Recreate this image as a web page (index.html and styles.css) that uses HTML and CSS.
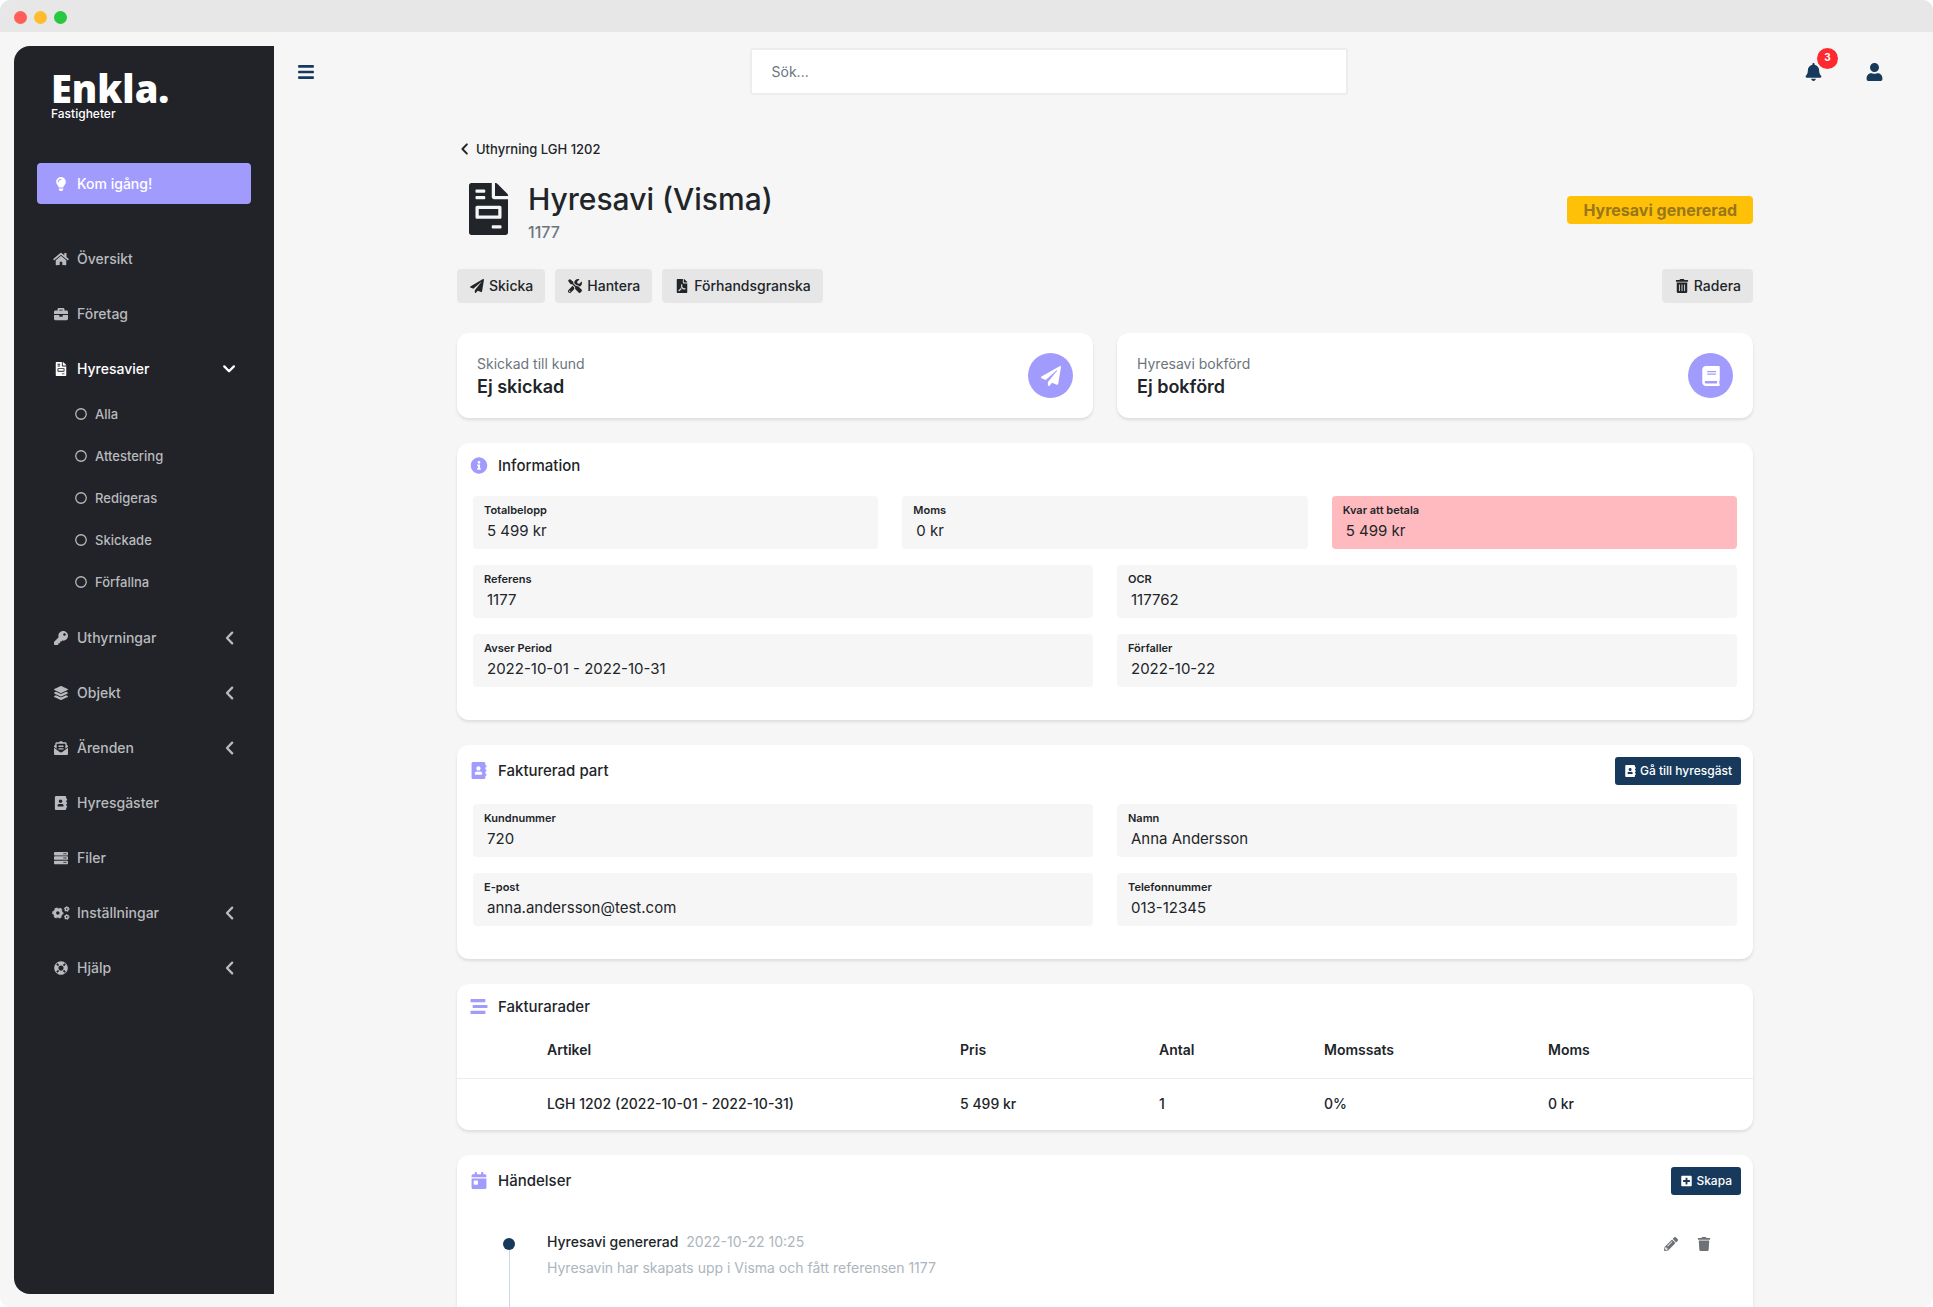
FILE: index.html
```html
<!DOCTYPE html>
<html lang="sv">
<head>
    <meta charset="UTF-8">
    <meta name="viewport" content="width=device-width, initial-scale=1.0">
    <title>Hyresavi (Visma) - Enkla Fastigheter</title>
    <link rel="stylesheet" href="styles.css">
</head>
<body>
    <!-- Icon sprite -->
    <svg class="sprite" aria-hidden="true">
        <symbol id="i-bars" viewBox="0 0 448 512"><path d="M16 132h416c9 0 16-7 16-16V76c0-9-7-16-16-16H16C7 60 0 67 0 76v40c0 9 7 16 16 16zm0 160h416c9 0 16-7 16-16v-40c0-9-7-16-16-16H16c-9 0-16 7-16 16v40c0 9 7 16 16 16zm0 160h416c9 0 16-7 16-16v-40c0-9-7-16-16-16H16c-9 0-16 7-16 16v40c0 9 7 16 16 16z"/></symbol>
        <symbol id="i-bell" viewBox="0 0 448 512"><path d="M224 512c35.32 0 63.97-28.65 63.97-64H160.03c0 35.35 28.65 64 63.97 64zm215.39-149.71c-19.32-20.76-55.47-51.99-55.47-154.29 0-77.7-54.48-139.9-127.94-155.16V32c0-17.67-14.32-32-31.98-32s-31.98 14.33-31.98 32v20.84C118.56 68.1 64.08 130.3 64.08 208c0 102.3-36.15 133.53-55.47 154.29-6 6.45-8.66 14.16-8.61 21.71.11 16.4 12.98 32 32.1 32h383.8c19.12 0 32-15.6 32.1-32 .05-7.55-2.61-15.27-8.61-21.71z"/></symbol>
        <symbol id="i-user" viewBox="0 0 448 512"><path d="M224 256c70.7 0 128-57.3 128-128S294.7 0 224 0 96 57.3 96 128s57.3 128 128 128zm89.6 32h-16.7c-22.2 10.2-46.9 16-72.9 16s-50.6-5.8-72.9-16h-16.7C60.2 288 0 348.2 0 422.4V464c0 26.5 21.5 48 48 48h352c26.5 0 48-21.5 48-48v-41.6c0-74.2-60.2-134.4-134.4-134.4z"/></symbol>
        <symbol id="i-bulb" viewBox="0 0 352 512"><path d="M96.06 454.35c.01 6.29 1.87 12.45 5.36 17.69l17.09 25.69a31.99 31.99 0 0 0 26.64 14.28h61.71a31.99 31.99 0 0 0 26.64-14.28l17.09-25.69a31.989 31.989 0 0 0 5.36-17.69l.04-38.35H96.01l.05 38.35zM0 176c0 44.37 16.45 84.85 43.56 115.78 16.52 18.85 42.36 58.23 52.21 91.45.04.26.07.52.11.78h160.24c.04-.26.07-.51.11-.78 9.85-33.22 35.69-72.6 52.21-91.45C335.55 260.85 352 220.37 352 176 352 78.61 272.91-.3 175.45 0 73.44.31 0 82.97 0 176zm176-80c-44.11 0-80 35.89-80 80 0 8.84-7.16 16-16 16s-16-7.16-16-16c0-61.76 50.24-112 112-112 8.84 0 16 7.16 16 16s-7.16 16-16 16z"/></symbol>
        <symbol id="i-home" viewBox="0 0 576 512"><path d="M280.37 148.26L96 300.11V464a16 16 0 0 0 16 16l112.06-.29a16 16 0 0 0 15.92-16V368a16 16 0 0 1 16-16h64a16 16 0 0 1 16 16v95.64a16 16 0 0 0 16 16.05L464 480a16 16 0 0 0 16-16V300L295.67 148.26a12.19 12.19 0 0 0-15.3 0zM571.6 251.47L488 182.56V44.05a12 12 0 0 0-12-12h-56a12 12 0 0 0-12 12v72.61L318.47 43a48 48 0 0 0-61 0L4.34 251.47a12 12 0 0 0-1.6 16.9l25.5 31A12 12 0 0 0 45.15 301l235.22-193.74a12.19 12.19 0 0 1 15.3 0L530.9 301a12 12 0 0 0 16.9-1.6l25.5-31a12 12 0 0 0-1.7-16.93z"/></symbol>
        <symbol id="i-briefcase" viewBox="0 0 512 512"><path d="M320 336c0 8.84-7.16 16-16 16h-96c-8.84 0-16-7.16-16-16v-48H0v144c0 25.6 22.4 48 48 48h416c25.6 0 48-22.4 48-48V288H320v48zm144-208h-80V80c0-25.6-22.4-48-48-48H176c-25.6 0-48 22.4-48 48v48H48c-25.6 0-48 22.4-48 48v80h512v-80c0-25.6-22.4-48-48-48zm-144 0H192V96h128v32z"/></symbol>
        <symbol id="i-invoice" viewBox="0 0 384 512"><path d="M288 256H96v64h192v-64zm89-151L279.1 7c-4.5-4.5-10.6-7-17-7H256v128h128v-6.1c0-6.3-2.5-12.4-7-16.9zm-153 31V0H24C10.7 0 0 10.7 0 24v464c0 13.3 10.7 24 24 24h336c13.3 0 24-10.7 24-24V160H248c-13.2 0-24-10.8-24-24zM64 72c0-4.42 3.58-8 8-8h80c4.42 0 8 3.58 8 8v16c0 4.42-3.58 8-8 8H72c-4.42 0-8-3.58-8-8V72zm0 64c0-4.42 3.58-8 8-8h80c4.42 0 8 3.58 8 8v16c0 4.42-3.58 8-8 8H72c-4.42 0-8-3.58-8-8v-16zm256 304c0 4.42-3.58 8-8 8h-80c-4.42 0-8-3.58-8-8v-16c0-4.42 3.58-8 8-8h80c4.42 0 8 3.58 8 8v16zm0-200v96c0 8.84-7.16 16-16 16H80c-8.84 0-16-7.16-16-16v-96c0-8.84 7.16-16 16-16h224c8.84 0 16 7.16 16 16z"/></symbol>
        <symbol id="i-key" viewBox="0 0 512 512"><path d="M512 176.001C512 273.203 433.202 352 336 352c-11.22 0-22.19-1.062-32.827-3.069l-24.012 27.014A23.999 23.999 0 0 1 261.223 384H224v40c0 13.255-10.745 24-24 24h-40v40c0 13.255-10.745 24-24 24H24c-13.255 0-24-10.745-24-24v-78.059c0-6.365 2.529-12.47 7.029-16.971l161.802-161.802C163.108 213.814 160 195.271 160 176 160 78.798 238.797.001 335.999 0 433.488-.001 512 78.511 512 176.001zM336 128c0 26.51 21.49 48 48 48s48-21.49 48-48-21.49-48-48-48-48 21.49-48 48z"/></symbol>
        <symbol id="i-layers" viewBox="0 0 512 512"><path d="M12.41 148.02l232.94 105.67c6.8 3.09 14.49 3.09 21.29 0l232.94-105.67c16.55-7.51 16.55-32.52 0-40.03L266.65 2.31a25.607 25.607 0 0 0-21.29 0L12.41 107.98c-16.55 7.51-16.55 32.53 0 40.04zm487.18 88.28l-58.09-26.33-161.64 73.27c-7.56 3.43-15.59 5.17-23.86 5.17s-16.29-1.74-23.86-5.17L70.51 209.97l-58.1 26.33c-16.55 7.5-16.55 32.5 0 40l232.94 105.59c6.8 3.08 14.49 3.08 21.29 0L499.59 276.3c16.55-7.5 16.55-32.5 0-40zm0 127.8l-57.87-26.23-161.86 73.37c-7.56 3.43-15.59 5.17-23.86 5.17s-16.29-1.74-23.86-5.17L70.29 337.87 12.41 364.1c-16.55 7.5-16.55 32.5 0 40l232.94 105.59c6.8 3.08 14.49 3.08 21.29 0L499.59 404.1c16.55-7.5 16.55-32.5 0-40z"/></symbol>
        <symbol id="i-mail" viewBox="0 0 512 512"><path d="M176 216h160c8.84 0 16-7.16 16-16v-16c0-8.84-7.16-16-16-16H176c-8.84 0-16 7.16-16 16v16c0 8.84 7.16 16 16 16zm-16 80c0 8.84 7.16 16 16 16h160c8.84 0 16-7.16 16-16v-16c0-8.84-7.16-16-16-16H176c-8.84 0-16 7.16-16 16v16zm96 121.13c-16.42 0-32.84-5.06-46.86-15.19L0 250.86V464c0 26.51 21.49 48 48 48h416c26.51 0 48-21.49 48-48V250.86L302.86 401.94c-14.02 10.12-30.44 15.19-46.86 15.19zm237.61-254.18c-8.85-6.94-17.24-13.47-29.61-22.81V96c0-26.51-21.49-48-48-48h-77.55c-3.04-2.2-5.87-4.26-9.04-6.56C312.6 29.17 279.2-.35 256 0c-23.2-.35-56.59 29.17-73.41 41.44-3.17 2.3-6 4.36-9.04 6.56H96c-26.51 0-48 21.49-48 48v44.14c-12.37 9.33-20.76 15.87-29.61 22.81A47.995 47.995 0 0 0 0 200.72v10.65l96 69.35V96h320v184.72l96-69.35v-10.65c0-14.74-6.78-28.67-18.39-37.77z"/></symbol>
        <symbol id="i-contacts" viewBox="0 0 448 512"><path d="M436 160c6.6 0 12-5.4 12-12v-40c0-6.6-5.4-12-12-12h-20V48c0-26.5-21.5-48-48-48H48C21.5 0 0 21.5 0 48v416c0 26.5 21.5 48 48 48h320c26.5 0 48-21.5 48-48v-48h20c6.6 0 12-5.4 12-12v-40c0-6.6-5.4-12-12-12h-20v-64h20c6.6 0 12-5.4 12-12v-40c0-6.6-5.4-12-12-12h-20v-64h20zm-228-32c35.3 0 64 28.7 64 64s-28.7 64-64 64-64-28.7-64-64 28.7-64 64-64zm112 236.8c0 10.6-10 19.2-22.4 19.2H118.4C106 384 96 375.4 96 364.8v-19.2c0-31.8 30.1-57.6 67.2-57.6h5c12.3 5.1 25.7 8 39.8 8s27.6-2.9 39.8-8h5c37.1 0 67.2 25.8 67.2 57.6v19.2z"/></symbol>
        <symbol id="i-server" viewBox="0 0 512 512"><path fill-rule="evenodd" d="M32 32h448a32 32 0 0 1 32 32v64a32 32 0 0 1-32 32H32a32 32 0 0 1-32-32V64a32 32 0 0 1 32-32zm400 40a24 24 0 1 0 0 48 24 24 0 0 0 0-48zm-64 0a24 24 0 1 0 0 48 24 24 0 0 0 0-48zM32 192h448a32 32 0 0 1 32 32v64a32 32 0 0 1-32 32H32a32 32 0 0 1-32-32v-64a32 32 0 0 1 32-32zm400 40a24 24 0 1 0 0 48 24 24 0 0 0 0-48zm-64 0a24 24 0 1 0 0 48 24 24 0 0 0 0-48zM32 352h448a32 32 0 0 1 32 32v64a32 32 0 0 1-32 32H32a32 32 0 0 1-32-32v-64a32 32 0 0 1 32-32zm400 40a24 24 0 1 0 0 48 24 24 0 0 0 0-48zm-64 0a24 24 0 1 0 0 48 24 24 0 0 0 0-48z"/></symbol>
        <symbol id="i-cogs" viewBox="0 0 640 512">
            <g fill="none" stroke="currentColor">
                <circle cx="205" cy="256" r="120" stroke-width="108"/>
                <circle cx="205" cy="256" r="176" stroke-width="58" stroke-dasharray="104.3 80" stroke-dashoffset="52"/>
                <circle cx="530" cy="112" r="56" stroke-width="52"/>
                <circle cx="530" cy="112" r="86" stroke-width="36" stroke-dasharray="50 40.06" stroke-dashoffset="25"/>
                <circle cx="530" cy="400" r="56" stroke-width="52"/>
                <circle cx="530" cy="400" r="86" stroke-width="36" stroke-dasharray="50 40.06" stroke-dashoffset="25"/>
            </g>
        </symbol>
        <symbol id="i-help" viewBox="0 0 512 512"><path d="M256 8C119.033 8 8 119.033 8 256s111.033 248 248 248 248-111.033 248-248S392.967 8 256 8zm173.696 119.559l-63.399 63.399c-10.987-18.559-26.67-34.252-45.255-45.255l63.399-63.399a218.396 218.396 0 0 1 45.255 45.255zM256 352c-53.019 0-96-42.981-96-96s42.981-96 96-96 96 42.981 96 96-42.981 96-96 96zM127.559 82.304l63.399 63.399c-18.559 10.987-34.252 26.67-45.255 45.255l-63.399-63.399a218.372 218.372 0 0 1 45.255-45.255zM82.304 384.441l63.399-63.399c10.987 18.559 26.67 34.252 45.255 45.255l-63.399 63.399a218.396 218.396 0 0 1-45.255-45.255zm302.137 45.255l-63.399-63.399c18.559-10.987 34.252-26.67 45.255-45.255l63.399 63.399a218.403 218.403 0 0 1-45.255 45.255z"/></symbol>
        <symbol id="i-left" viewBox="0 0 512 512"><path d="M336 60L146 256l190 196" fill="none" stroke="currentColor" stroke-width="84" stroke-linecap="round" stroke-linejoin="round"/></symbol>
        <symbol id="i-down" viewBox="0 0 512 512"><path d="M46 160l176 180 176-180" fill="none" stroke="currentColor" stroke-width="84" stroke-linecap="round" stroke-linejoin="round"/></symbol>
        <symbol id="i-ring" viewBox="0 0 512 512"><circle cx="256" cy="256" r="224" fill="none" stroke="currentColor" stroke-width="54"/></symbol>
        <symbol id="i-plane" viewBox="0 0 512 512"><path d="M476 3.2L12.5 270.6c-18.1 10.4-15.8 35.6 2.2 43.2L121 358.4l287.3-253.2c5.5-4.9 13.3 2.6 8.6 8.3L176 407v80.5c0 23.6 28.5 32.9 42.5 15.8L282 426l124.6 52.2c14.2 6 30.4-2.9 33-18.2l72-432C515 7.8 493.3-6.8 476 3.2z"/></symbol>
        <symbol id="i-tools" viewBox="0 0 512 512"><path d="M501.1 395.7L384 278.6c-23.1-23.1-57.6-27.6-85.4-13.9L192 158.1V96L64 0 0 64l96 128h62.1l106.6 106.6c-13.6 27.8-9.2 62.3 13.9 85.4l117.1 117.1c14.6 14.6 38.2 14.6 52.7 0l52.7-52.7c14.5-14.6 14.5-38.2 0-52.7zM331.7 225c28.3 0 54.9 11 74.9 31l19.4 19.4c15.8-6.9 30.8-16.5 43.8-29.5 37.1-37.1 49.7-89.3 37.9-136.7-2.2-9-13.5-12.1-20.1-5.5l-74.4 74.4-67.9-11.3L334 98.9l74.4-74.4c6.6-6.6 3.4-17.9-5.7-20.2-47.4-11.7-99.6.9-136.6 37.9-28.5 28.5-41.9 66.1-41.2 103.6l82.1 82.1c8.1-1.9 16.5-2.9 24.7-2.9zm-103.9 82l-56.7-56.7L18.7 402.8c-25 25-25 65.5 0 90.5s65.5 25 90.5 0l123.6-123.6c-7.6-19.9-9.9-41.6-5-62.7zM64 472c-13.2 0-24-10.8-24-24 0-13.3 10.7-24 24-24s24 10.7 24 24c0 13.2-10.7 24-24 24z"/></symbol>
        <symbol id="i-pdf" viewBox="0 0 384 512"><path d="M181.9 256.1c-5-16-4.9-46.9-2-46.9 8.4 0 7.6 36.9 2 46.9zm-1.7 47.2c-7.7 20.2-17.3 43.3-28.4 62.7 18.3-7 39-17.2 62.9-21.9-12.7-9.6-24.9-23.4-34.5-40.8zM86.1 428.1c0 .8 13.2-5.4 34.9-40.2-6.7 6.3-29.1 24.5-34.9 40.2zM248 160h136v328c0 13.3-10.7 24-24 24H24c-13.3 0-24-10.7-24-24V24C0 10.7 10.7 0 24 0h200v136c0 13.2 10.8 24 24 24zm-8 171.8c-20-12.2-33.3-29-42.7-53.8 4.5-18.5 11.6-46.6 6.2-64.2-4.7-29.4-42.4-26.5-47.8-6.8-5 18.3-.4 44.1 8.1 77-11.6 27.6-28.7 64.6-40.8 85.8-.1 0-.1.1-.2.1-27.1 13.9-73.6 44.5-54.5 68 5.6 6.9 16 10 21.5 10 17.9 0 35.7-18 61.1-61.8 25.8-8.5 54.1-19.1 79-23.2 21.7 11.8 47.1 19.5 64 19.5 29.2 0 31.2-32 19.7-43.4-13.9-13.6-54.3-9.7-73.6-7.2zM377 105L279 7c-4.5-4.5-10.6-7-17-7h-6v128h128v-6.1c0-6.3-2.5-12.4-7-16.9zm-74.1 255.3c4.1-2.7-2.5-11.9-42.8-9 37.1 15.8 42.8 9 42.8 9z"/></symbol>
        <symbol id="i-trash-alt" viewBox="0 0 448 512"><path d="M32 464a48 48 0 0 0 48 48h288a48 48 0 0 0 48-48V128H32zm272-256a16 16 0 0 1 32 0v224a16 16 0 0 1-32 0zm-96 0a16 16 0 0 1 32 0v224a16 16 0 0 1-32 0zm-96 0a16 16 0 0 1 32 0v224a16 16 0 0 1-32 0zM432 32H312l-9.4-18.7A24 24 0 0 0 281.1 0H166.8a23.72 23.72 0 0 0-21.4 13.3L136 32H16A16 16 0 0 0 0 48v32a16 16 0 0 0 16 16h416a16 16 0 0 0 16-16V48a16 16 0 0 0-16-16z"/></symbol>
        <symbol id="i-trash" viewBox="0 0 448 512"><path d="M432 32H312l-9.4-18.7A24 24 0 0 0 281.1 0H166.8a23.72 23.72 0 0 0-21.4 13.3L136 32H16A16 16 0 0 0 0 48v32a16 16 0 0 0 16 16h416a16 16 0 0 0 16-16V48a16 16 0 0 0-16-16zM53.2 467a48 48 0 0 0 47.9 45h245.8a48 48 0 0 0 47.9-45L416 128H32z"/></symbol>
        <symbol id="i-book" viewBox="0 0 448 512"><path d="M448 360V24c0-13.3-10.7-24-24-24H96C43 0 0 43 0 96v320c0 53 43 96 96 96h328c13.3 0 24-10.7 24-24v-16c0-7.5-3.5-14.3-8.9-18.7-4.2-15.4-4.2-59.3 0-74.7 5.4-4.3 8.9-11.1 8.9-18.6zM128 134c0-3.3 2.7-6 6-6h212c3.3 0 6 2.7 6 6v20c0 3.3-2.7 6-6 6H134c-3.3 0-6-2.7-6-6v-20zm0 64c0-3.3 2.7-6 6-6h212c3.3 0 6 2.7 6 6v20c0 3.3-2.7 6-6 6H134c-3.3 0-6-2.7-6-6v-20zm253.4 250H96c-17.7 0-32-14.3-32-32 0-17.6 14.4-32 32-32h285.4c-1.9 17.1-1.9 46.9 0 64z"/></symbol>
        <symbol id="i-info" viewBox="0 0 512 512"><path d="M256 8C119.043 8 8 119.083 8 256c0 136.997 111.043 248 248 248s248-111.003 248-248C504 119.083 392.957 8 256 8zm0 110c23.196 0 42 18.804 42 42s-18.804 42-42 42-42-18.804-42-42 18.804-42 42-42zm56 254c0 6.627-5.373 12-12 12h-88c-6.627 0-12-5.373-12-12v-24c0-6.627 5.373-12 12-12h12v-64h-12c-6.627 0-12-5.373-12-12v-24c0-6.627 5.373-12 12-12h64c6.627 0 12 5.373 12 12v100h12c6.627 0 12 5.373 12 12v24z"/></symbol>
        <symbol id="i-rows" viewBox="0 0 512 512"><path d="M16 128h416c8.84 0 16-7.16 16-16V48c0-8.84-7.16-16-16-16H16C7.16 32 0 39.16 0 48v64c0 8.84 7.16 16 16 16zm480 80H80c-8.84 0-16 7.16-16 16v64c0 8.84 7.16 16 16 16h416c8.84 0 16-7.16 16-16v-64c0-8.84-7.16-16-16-16zm-64 176H16c-8.84 0-16 7.16-16 16v64c0 8.84 7.16 16 16 16h416c8.84 0 16-7.16 16-16v-64c0-8.84-7.16-16-16-16z"/></symbol>
        <symbol id="i-calendar" viewBox="0 0 448 512"><path d="M0 464c0 26.5 21.5 48 48 48h352c26.5 0 48-21.5 48-48V192H0v272zm64-192c0-8.8 7.2-16 16-16h96c8.8 0 16 7.2 16 16v96c0 8.8-7.2 16-16 16H80c-8.8 0-16-7.2-16-16v-96zM400 64h-48V16c0-8.8-7.2-16-16-16h-32c-8.8 0-16 7.2-16 16v48H160V16c0-8.8-7.2-16-16-16h-32c-8.8 0-16 7.2-16 16v48H48C21.5 64 0 85.5 0 112v48h448v-48c0-26.5-21.5-48-48-48z"/></symbol>
        <symbol id="i-plus" viewBox="0 0 448 512"><path d="M400 32H48C21.5 32 0 53.5 0 80v352c0 26.5 21.5 48 48 48h352c26.5 0 48-21.5 48-48V80c0-26.5-21.5-48-48-48zm-32 252c0 6.6-5.4 12-12 12h-92v92c0 6.6-5.4 12-12 12h-56c-6.6 0-12-5.4-12-12v-92H92c-6.6 0-12-5.4-12-12v-56c0-6.6 5.4-12 12-12h92v-92c0-6.6 5.4-12 12-12h56c6.6 0 12 5.4 12 12v92h92c6.6 0 12 5.4 12 12v56z"/></symbol>
        <symbol id="i-pencil" viewBox="0 0 512 512"><path d="M497.9 142.1l-46.1 46.1c-4.7 4.7-12.3 4.7-17 0l-111-111c-4.7-4.7-4.7-12.3 0-17l46.1-46.1c18.7-18.7 49.1-18.7 67.9 0l60.1 60.1c18.8 18.7 18.8 49.1 0 67.9zM284.2 99.8L21.6 362.4.4 483.9c-2.9 16.4 11.4 30.6 27.8 27.8l121.5-21.3 262.6-262.6c4.7-4.7 4.7-12.3 0-17l-111-111c-4.8-4.7-12.4-4.7-17.1 0zM124.1 339.9c-5.5-5.5-5.5-14.3 0-19.8l154-154c5.5-5.5 14.3-5.5 19.8 0s5.5 14.3 0 19.8l-154 154c-5.5 5.5-14.3 5.5-19.8 0zM88 424h48v36.3l-64.5 11.3-31.1-31.1L51.7 376H88v48z"/></symbol>
    </svg>

    <div class="window">
        <div class="titlebar">
            <span class="dot dot-red"></span>
            <span class="dot dot-yellow"></span>
            <span class="dot dot-green"></span>
        </div>

        <div class="app">
            <aside class="sidebar">
                <a href="#" class="brand">
                    <span class="brand-name">Enkla.</span>
                    <span class="brand-sub">Fastigheter</span>
                </a>

                <a href="#" class="start-link"><svg class="icon"><use href="#i-bulb"/></svg>Kom igång!</a>

                <nav>
                    <ul class="menu">
                        <li><a href="#" class="menu-link"><svg class="icon"><use href="#i-home"/></svg>Översikt</a></li>
                        <li><a href="#" class="menu-link"><svg class="icon"><use href="#i-briefcase"/></svg>Företag</a></li>
                        <li>
                            <a href="#" class="menu-link active"><svg class="icon"><use href="#i-invoice"/></svg>Hyresavier<svg class="icon arrow"><use href="#i-down"/></svg></a>
                            <ul class="submenu">
                                <li><a href="#"><svg class="icon"><use href="#i-ring"/></svg>Alla</a></li>
                                <li><a href="#"><svg class="icon"><use href="#i-ring"/></svg>Attestering</a></li>
                                <li><a href="#"><svg class="icon"><use href="#i-ring"/></svg>Redigeras</a></li>
                                <li><a href="#"><svg class="icon"><use href="#i-ring"/></svg>Skickade</a></li>
                                <li><a href="#"><svg class="icon"><use href="#i-ring"/></svg>Förfallna</a></li>
                            </ul>
                        </li>
                        <li><a href="#" class="menu-link"><svg class="icon"><use href="#i-key"/></svg>Uthyrningar<svg class="icon arrow"><use href="#i-left"/></svg></a></li>
                        <li><a href="#" class="menu-link"><svg class="icon"><use href="#i-layers"/></svg>Objekt<svg class="icon arrow"><use href="#i-left"/></svg></a></li>
                        <li><a href="#" class="menu-link"><svg class="icon"><use href="#i-mail"/></svg>Ärenden<svg class="icon arrow"><use href="#i-left"/></svg></a></li>
                        <li><a href="#" class="menu-link"><svg class="icon"><use href="#i-contacts"/></svg>Hyresgäster</a></li>
                        <li><a href="#" class="menu-link"><svg class="icon"><use href="#i-server"/></svg>Filer</a></li>
                        <li><a href="#" class="menu-link"><svg class="icon"><use href="#i-cogs"/></svg>Inställningar<svg class="icon arrow"><use href="#i-left"/></svg></a></li>
                        <li><a href="#" class="menu-link"><svg class="icon"><use href="#i-help"/></svg>Hjälp<svg class="icon arrow"><use href="#i-left"/></svg></a></li>
                    </ul>
                </nav>
            </aside>

            <div class="page">
                <header class="topbar">
                    <button type="button" class="icon-btn" aria-label="Meny"><svg class="icon"><use href="#i-bars"/></svg></button>
                    <input type="search" class="search" placeholder="Sök..." aria-label="Sök">
                    <div class="topbar-right">
                        <button type="button" class="icon-btn" aria-label="Notiser"><svg class="icon"><use href="#i-bell"/></svg><span class="count">3</span></button>
                        <button type="button" class="icon-btn" aria-label="Konto"><svg class="icon"><use href="#i-user"/></svg></button>
                    </div>
                </header>

                <main class="content">
                    <div class="container">
                        <div class="page-head">
                            <a href="#" class="back"><svg class="icon"><use href="#i-left"/></svg>Uthyrning LGH 1202</a>

                            <div class="heading">
                                <svg class="icon heading-icon"><use href="#i-invoice"/></svg>
                                <div>
                                    <h1>Hyresavi (Visma)</h1>
                                    <p>1177</p>
                                </div>
                                <span class="status">Hyresavi genererad</span>
                            </div>

                            <div class="actions">
                                <button type="button" class="btn"><svg class="icon"><use href="#i-plane"/></svg>Skicka</button>
                                <button type="button" class="btn"><svg class="icon"><use href="#i-tools"/></svg>Hantera</button>
                                <button type="button" class="btn"><svg class="icon"><use href="#i-pdf"/></svg>Förhandsgranska</button>
                                <button type="button" class="btn btn-last"><svg class="icon"><use href="#i-trash-alt"/></svg>Radera</button>
                            </div>
                        </div>

                        <div class="grid two">
                            <section class="card stat">
                                <div>
                                    <p class="stat-label">Skickad till kund</p>
                                    <p class="stat-value">Ej skickad</p>
                                </div>
                                <span class="stat-icon"><svg class="icon"><use href="#i-plane"/></svg></span>
                            </section>
                            <section class="card stat">
                                <div>
                                    <p class="stat-label">Hyresavi bokförd</p>
                                    <p class="stat-value">Ej bokförd</p>
                                </div>
                                <span class="stat-icon"><svg class="icon"><use href="#i-book"/></svg></span>
                            </section>
                        </div>

                        <section class="card">
                            <div class="card-header">
                                <svg class="icon"><use href="#i-info"/></svg>
                                <h2>Information</h2>
                            </div>
                            <div class="card-body">
                                <div class="grid three">
                                    <div class="field"><label for="total">Totalbelopp</label><input id="total" value="5 499 kr" readonly></div>
                                    <div class="field"><label for="moms">Moms</label><input id="moms" value="0 kr" readonly></div>
                                    <div class="field field-due"><label for="kvar">Kvar att betala</label><input id="kvar" value="5 499 kr" readonly></div>
                                </div>
                                <div class="grid two">
                                    <div class="field"><label for="referens">Referens</label><input id="referens" value="1177" readonly></div>
                                    <div class="field"><label for="ocr">OCR</label><input id="ocr" value="117762" readonly></div>
                                    <div class="field"><label for="period">Avser Period</label><input id="period" value="2022-10-01 - 2022-10-31" readonly></div>
                                    <div class="field"><label for="forfaller">Förfaller</label><input id="forfaller" value="2022-10-22" readonly></div>
                                </div>
                            </div>
                        </section>

                        <section class="card">
                            <div class="card-header has-btn">
                                <svg class="icon"><use href="#i-contacts"/></svg>
                                <h2>Fakturerad part</h2>
                                <button type="button" class="btn btn-dark"><svg class="icon"><use href="#i-contacts"/></svg>Gå till hyresgäst</button>
                            </div>
                            <div class="card-body">
                                <div class="grid two">
                                    <div class="field"><label for="kundnummer">Kundnummer</label><input id="kundnummer" value="720" readonly></div>
                                    <div class="field"><label for="namn">Namn</label><input id="namn" value="Anna Andersson" readonly></div>
                                    <div class="field"><label for="epost">E-post</label><input id="epost" value="anna.andersson@test.com" readonly></div>
                                    <div class="field"><label for="telefon">Telefonnummer</label><input id="telefon" value="013-12345" readonly></div>
                                </div>
                            </div>
                        </section>

                        <section class="card">
                            <div class="card-header">
                                <svg class="icon"><use href="#i-rows"/></svg>
                                <h2>Fakturarader</h2>
                            </div>
                            <table class="rows">
                                <thead>
                                    <tr><th class="col-item">Artikel</th><th class="col-price">Pris</th><th class="col-count">Antal</th><th class="col-rate">Momssats</th><th>Moms</th></tr>
                                </thead>
                                <tbody>
                                    <tr><td class="col-item">LGH 1202 (2022-10-01 - 2022-10-31)</td><td>5 499 kr</td><td>1</td><td>0%</td><td>0 kr</td></tr>
                                </tbody>
                            </table>
                        </section>

                        <section class="card">
                            <div class="card-header has-btn">
                                <svg class="icon"><use href="#i-calendar"/></svg>
                                <h2>Händelser</h2>
                                <button type="button" class="btn btn-dark"><svg class="icon"><use href="#i-plus"/></svg>Skapa</button>
                            </div>
                            <ul class="timeline">
                                <li class="event">
                                    <span class="event-line"></span>
                                    <div class="event-text">
                                        <p class="event-title">Hyresavi genererad <time>2022-10-22 10:25</time></p>
                                        <p class="event-desc">Hyresavin har skapats upp i Visma och fått referensen 1177</p>
                                    </div>
                                    <div class="event-actions">
                                        <button type="button" aria-label="Redigera"><svg class="icon"><use href="#i-pencil"/></svg></button>
                                        <button type="button" aria-label="Ta bort"><svg class="icon"><use href="#i-trash"/></svg></button>
                                    </div>
                                </li>
                            </ul>
                        </section>
                    </div>
                </main>
            </div>
        </div>
    </div>
</body>
</html>
```
FILE: styles.css
```css
* {
    box-sizing: border-box;
}
body {
    margin: 0;
    font-family: Inter, "Liberation Sans", sans-serif;
    font-size: 14px;
    line-height: 20px;
    color: #212529;
    background: #fff;
}
h1,
h2,
p,
ul {
    margin: 0;
    padding: 0;
}
ul {
    list-style: none;
}
a {
    color: inherit;
    text-decoration: none;
}
button,
input {
    font: inherit;
    color: inherit;
    border: none;
    background: none;
    padding: 0;
}
button {
    cursor: pointer;
}
.sprite {
    display: none;
}
.icon {
    width: 18px;
    height: 14px;
    fill: currentColor;
    flex: none;
}

/* Window frame */
.window {
    display: flex;
    flex-direction: column;
    height: 100vh;
    overflow: hidden;
    border-radius: 10px;
    background: #f6f6f6;
}
.titlebar {
    display: flex;
    flex: none;
    align-items: center;
    gap: 7px;
    height: 32px;
    padding: 2px 14px 0;
    background: #e7e7e7;
}
.dot {
    width: 13px;
    height: 13px;
    border-radius: 50%;
}
.dot-red {
    background: #ff5f57;
}
.dot-yellow {
    background: #febc2e;
}
.dot-green {
    background: #28c840;
}
.app {
    display: flex;
    flex: 1;
    min-height: 0;
}

/* Sidebar */
.sidebar {
    display: flex;
    flex-direction: column;
    flex: none;
    width: 260px;
    margin: 14px 0 13px 14px;
    padding: 24px 23px;
    border-radius: 16px 0 0 16px;
    background: #212329;
    color: #b9babd;
    font-weight: 500;
}
.brand {
    display: flex;
    flex-direction: column;
    padding-left: 14px;
    color: #fff;
}
.brand-name {
    font-family: "Open Sans", sans-serif;
    font-size: 38px;
    font-weight: 800;
    line-height: 36px;
}
.brand-sub {
    font-size: 12px;
    line-height: 16px;
}
.start-link {
    display: flex;
    align-items: center;
    gap: 7px;
    height: 41px;
    margin: 41px 0 33px;
    padding: 0 15px;
    border-radius: 4px;
    background: #a29bfe;
    color: #fff;
}
.menu {
    display: flex;
    flex-direction: column;
    gap: 12px;
}
.menu-link {
    display: flex;
    align-items: center;
    gap: 7px;
    height: 43px;
    padding: 0 12px 0 15px;
}
.active {
    color: #fff;
}
.arrow {
    margin-left: auto;
}
.submenu {
    padding: 3px 0 1px 35px;
    font-size: 13px;
}
.submenu a {
    display: flex;
    align-items: center;
    gap: 5px;
    height: 42px;
}
.submenu .icon {
    height: 12px;
}

/* Top bar */
.page {
    flex: 1;
    min-width: 0;
    overflow: hidden;
}
.topbar {
    display: grid;
    grid-template-columns: 151fr 200fr 179fr;
    align-items: center;
    padding: 16px 50px 0 24px;
}
.icon-btn {
    display: flex;
    position: relative;
    width: max-content;
    color: #17395c;
}
.icon-btn .icon {
    width: 16px;
    height: 18px;
}
.search {
    width: 100%;
    height: 47px;
    padding: 0 20px;
    border: 2px solid #ededed;
    border-radius: 3px;
    background: #fff;
}
.search::placeholder {
    color: #6c757d;
}
.topbar-right {
    display: flex;
    justify-content: flex-end;
    gap: 44px;
}
.topbar-right .icon {
    width: 17px;
}
.count {
    position: absolute;
    top: -15px;
    left: 12px;
    width: 21px;
    height: 21px;
    border-radius: 50%;
    background: #ff2a2f;
    color: #fff;
    font-size: 10px;
    font-weight: 700;
    line-height: 19px;
    text-align: center;
}

/* Content */
.content {
    padding: 44px 20px 0 23px;
}
.container {
    display: flex;
    flex-direction: column;
    gap: 25px;
    max-width: 1296px;
    margin: 0 auto;
}
.page-head {
    display: flex;
    flex-direction: column;
    gap: 22px;
    margin-bottom: 5px;
}
.back {
    display: flex;
    align-items: center;
    gap: 3px;
    width: max-content;
    font-size: 13px;
    font-weight: 500;
}
.back .icon {
    width: 16px;
    height: 12px;
}
.heading {
    display: flex;
    align-items: flex-start;
    gap: 20px;
    padding-left: 12px;
}
.heading-icon {
    width: 39px;
    height: 52px;
    margin-top: 2px;
}
.heading h1 {
    font-size: 30px;
    font-weight: 500;
    line-height: 36px;
}
.heading p {
    font-size: 16px;
    font-weight: 500;
    line-height: 30px;
    color: #6c757d;
}
.status {
    margin: 15px 0 0 auto;
    padding: 4px 16px;
    border-radius: 4px;
    background: #ffc107;
    color: #98761a;
    font-size: 16px;
    font-weight: 700;
}
.actions {
    display: flex;
    gap: 10px;
}
.btn {
    display: flex;
    align-items: center;
    gap: 3px;
    height: 34px;
    padding: 0 12px 0 11px;
    border-radius: 4px;
    background: #e6e6e6;
    font-weight: 500;
}
.btn-last {
    margin-left: auto;
}
.btn-dark {
    gap: 2px;
    height: 28px;
    margin-left: auto;
    padding: 0 9px 0 8px;
    border-radius: 3px;
    background: #17395c;
    color: #fff;
    font-size: 12px;
}
.btn-dark .icon {
    width: 15px;
    height: 12px;
}
.grid {
    display: grid;
    gap: 16px 24px;
}
.two {
    grid-template-columns: repeat(2, 1fr);
}
.three {
    grid-template-columns: repeat(3, 1fr);
}
.card {
    border-radius: 12px;
    background: #fff;
    box-shadow: 0 2px 3px rgba(40, 40, 80, 0.12);
}
.stat {
    display: flex;
    align-items: center;
    justify-content: space-between;
    padding: 20px;
}
.stat-label {
    line-height: 22px;
    color: #6c757d;
}
.stat-value {
    font-size: 18px;
    font-weight: 600;
    line-height: 23px;
}
.stat-icon {
    display: flex;
    align-items: center;
    justify-content: center;
    width: 45px;
    height: 45px;
    border-radius: 50%;
    background: #a29bfe;
    color: #fff;
}
.stat-icon .icon {
    width: 20px;
    height: 20px;
}
.card-header {
    display: flex;
    align-items: center;
    gap: 10px;
    height: 45px;
    padding: 0 12px 0 13px;
}
.card-header.has-btn {
    height: 51px;
}
.card-header > .icon {
    width: 18px;
    height: 17px;
    color: #a29bfe;
}
.card-header h2 {
    font-size: 15px;
    font-weight: 500;
}
.card-body {
    display: flex;
    flex-direction: column;
    gap: 16px;
    padding: 8px 16px 33px;
}
.field {
    display: flex;
    flex-direction: column;
    padding: 6px 11px 7px;
    border-radius: 4px;
    background: #f6f6f6;
}
.field-due {
    background: #ffbabf;
}
.field label {
    font-size: 11px;
    font-weight: 600;
    line-height: 16px;
}
.field input {
    width: 100%;
    height: 24px;
    padding: 0 3px;
    font-size: 15px;
}

/* Invoice rows */
.rows {
    width: 100%;
    border-collapse: collapse;
}
.rows th,
.rows td {
    padding: 0;
    text-align: left;
}
.rows th {
    height: 49px;
    padding-bottom: 7px;
    font-weight: 600;
}
.rows td {
    height: 52px;
    border-top: 1px solid #ececec;
    font-weight: 500;
}
.rows .col-item {
    width: 503px;
    padding-left: 90px;
}
.col-price {
    width: 199px;
}
.col-count {
    width: 165px;
}
.col-rate {
    width: 224px;
}

/* Timeline */
.timeline {
    padding: 26px 40px 40px 46px;
}
.event {
    display: flex;
    align-items: flex-start;
}
.event-line {
    display: flex;
    flex-direction: column;
    align-items: center;
    width: 12px;
    margin: 6px 32px 0 0;
}
.event-line::before {
    content: "";
    width: 12px;
    height: 12px;
    border-radius: 50%;
    background: #17395c;
}
.event-line::after {
    content: "";
    width: 1px;
    height: 90px;
    background: #ccd8e6;
}
.event-title {
    font-weight: 500;
}
.event-title time {
    margin-left: 4px;
    font-weight: 400;
    color: #adb5bd;
}
.event-desc {
    margin-top: 6px;
    color: #adb5bd;
}
.event-actions {
    display: flex;
    gap: 15px;
    margin: 5px 0 0 auto;
    color: #6e7175;
}
.event-actions button {
    display: flex;
}
```
